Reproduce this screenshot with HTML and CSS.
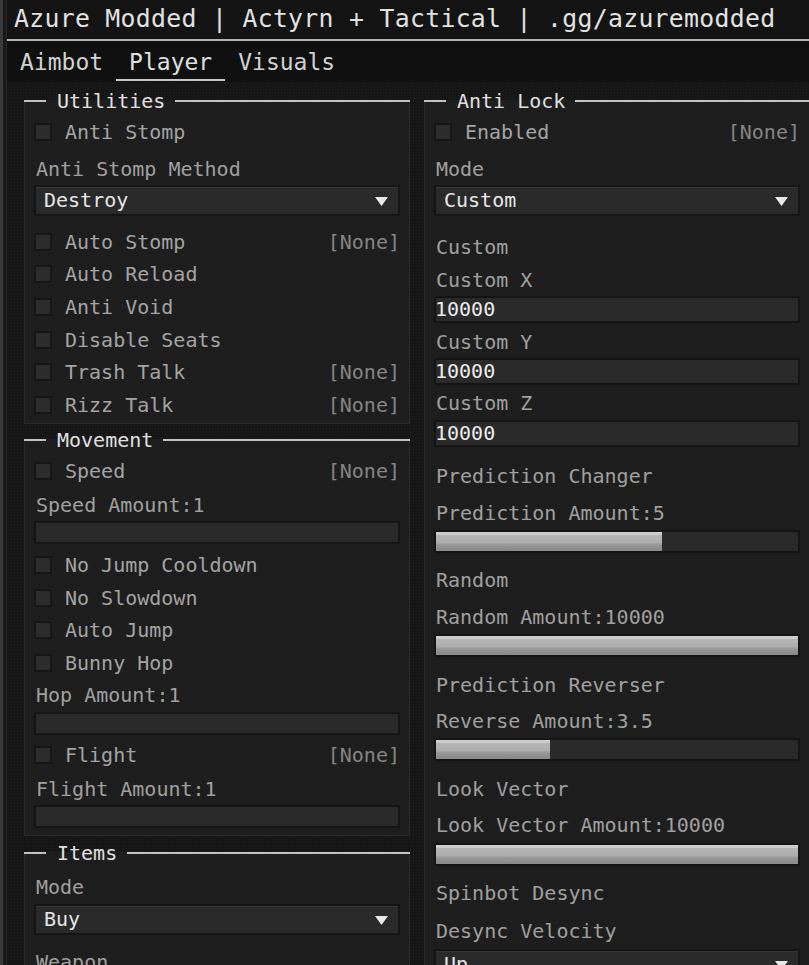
FILE: index.html
```html
<!DOCTYPE html>
<html>
<head>
<meta charset="utf-8">
<title>Azure Modded</title>
<link rel="stylesheet" href="styles.css">
</head>
<body>
<div class="window">
  <header class="titlebar">Azure Modded | Actyrn + Tactical | .gg/azuremodded</header>
  <nav class="tabs">
    <span class="tab">Aimbot</span>
    <span class="tab active">Player</span>
    <span class="tab">Visuals</span>
  </nav>
  <main class="content">
    <div class="col">
      <section class="panel pb2">
        <div class="sec-head"><span>Utilities</span></div>
        <div class="check"><i class="box"></i><span class="name">Anti Stomp</span></div>
        <div class="lbl mt8">Anti Stomp Method</div>
        <div class="combo mt4"><span>Destroy</span><svg class="arrow" width="13" height="9" viewBox="0 0 13 9"><polygon points="0,0 13,0 6.5,9"/></svg></div>
        <div class="checks mt10">
          <div class="check"><i class="box"></i><span class="name">Auto Stomp</span><span class="key">[None]</span></div>
          <div class="check"><i class="box"></i><span class="name">Auto Reload</span></div>
          <div class="check"><i class="box"></i><span class="name">Anti Void</span></div>
          <div class="check"><i class="box"></i><span class="name">Disable Seats</span></div>
          <div class="check"><i class="box"></i><span class="name">Trash Talk</span><span class="key">[None]</span></div>
          <div class="check"><i class="box"></i><span class="name">Rizz Talk</span><span class="key">[None]</span></div>
        </div>
      </section>
      <section class="panel pb7">
        <div class="sec-head"><span>Movement</span></div>
        <div class="check"><i class="box"></i><span class="name">Speed</span><span class="key">[None]</span></div>
        <div class="lbl mt5">Speed Amount:1</div>
        <div class="slider mt4"><div class="fill" style="width:0%"></div></div>
        <div class="checks mt5">
          <div class="check"><i class="box"></i><span class="name">No Jump Cooldown</span></div>
          <div class="check"><i class="box"></i><span class="name">No Slowdown</span></div>
          <div class="check"><i class="box"></i><span class="name">Auto Jump</span></div>
          <div class="check"><i class="box"></i><span class="name">Bunny Hop</span></div>
        </div>
        <div class="lbl mt4">Hop Amount:1</div>
        <div class="slider mt5"><div class="fill" style="width:0%"></div></div>
        <div class="check mt4"><i class="box"></i><span class="name">Flight</span><span class="key">[None]</span></div>
        <div class="lbl mt5">Flight Amount:1</div>
        <div class="slider mt4"><div class="fill" style="width:0%"></div></div>
      </section>
      <section class="panel items">
        <div class="sec-head"><span>Items</span></div>
        <div class="lbl mt21">Mode</div>
        <div class="combo mt5"><span>Buy</span><svg class="arrow" width="13" height="9" viewBox="0 0 13 9"><polygon points="0,0 13,0 6.5,9"/></svg></div>
        <div class="lbl mt15">Weapon</div>
      </section>
    </div>
    <div class="col">
      <section class="panel">
        <div class="sec-head"><span>Anti Lock</span></div>
        <div class="check"><i class="box"></i><span class="name">Enabled</span><span class="key">[None]</span></div>
        <div class="lbl mt8">Mode</div>
        <div class="combo mt4"><span>Custom</span><svg class="arrow" width="13" height="9" viewBox="0 0 13 9"><polygon points="0,0 13,0 6.5,9"/></svg></div>
        <div class="lbl mt19">Custom</div>
        <div class="lbl mt9">Custom X</div>
        <div class="input mt4">10000</div>
        <div class="lbl mt7">Custom Y</div>
        <div class="input mt4">10000</div>
        <div class="lbl mt6">Custom Z</div>
        <div class="input mt5">10000</div>
        <div class="lbl mt17">Prediction Changer</div>
        <div class="lbl mt13">Prediction Amount:5</div>
        <div class="slider mt5"><div class="fill" style="width:62.4%"></div></div>
        <div class="lbl mt15">Random</div>
        <div class="lbl mt13">Random Amount:10000</div>
        <div class="slider mt5"><div class="fill" style="width:100%"></div></div>
        <div class="lbl mt16">Prediction Reverser</div>
        <div class="lbl mt12">Reverse Amount:3.5</div>
        <div class="slider mt5"><div class="fill" style="width:31.5%"></div></div>
        <div class="lbl mt16">Look Vector</div>
        <div class="lbl mt12">Look Vector Amount:10000</div>
        <div class="slider mt6"><div class="fill" style="width:100%"></div></div>
        <div class="lbl mt15">Spinbot Desync</div>
        <div class="lbl mt14">Desync Velocity</div>
        <div class="combo mt6"><span>Up</span><svg class="arrow" width="13" height="9" viewBox="0 0 13 9"><polygon points="0,0 13,0 6.5,9"/></svg></div>
      </section>
    </div>
  </main>
</div>
</body>
</html>
```
FILE: styles.css
```css
html, body {
  margin: 0;
  height: 100%;
  overflow: hidden;
}
body {
  background: linear-gradient(to right, #3a3a3a 0, #3a3a3a 3px, #191919 3px, #191919 6px, #262626 6px, #262626 7px) no-repeat;
  background-color: #191919;
  font-family: "DejaVu Sans Mono", "Liberation Mono", monospace;
  color: #a2a2a2;
}
.window {
  margin-left: 7px;
  width: 803px;
  height: 965px;
  background: #161616;
  overflow: hidden;
}
.titlebar {
  height: 37px;
  line-height: 37px;
  padding: 0 0 2px 7px;
  border-bottom: 2px solid #b4b4b4;
  background: #141414;
  color: #e2e2e2;
  font-size: 24.8px;
  letter-spacing: 0.3px;
  white-space: nowrap;
}
.tabs {
  display: flex;
  height: 41px;
  background: #101010;
}
.tab {
  padding: 5px 13px 0;
  line-height: 33px;
  height: 33px;
  border-bottom: 2px solid transparent;
  font-size: 23px;
  color: #d2d2d2;
}
.tab.active {
  border-bottom-color: #c8c8c8;
  color: #e0e0e0;
}
.content {
  display: grid;
  grid-template-columns: 386px 386px;
  column-gap: 14px;
  align-items: start;
  padding: 18px 0 0 17px;
  background-color: #161616;
  background-image: radial-gradient(rgba(255,255,255,0.035) 0.6px, transparent 0.8px);
  background-size: 3px 3px;
  height: 900px;
}
.col {
  display: flex;
  flex-direction: column;
}
.panel {
  background: #1e1e1e;
  border: 1px solid #2a2a2a;
  border-top: none;
  padding: 0 9px 0 9px;
  font-size: 20px;
}
.panel + .panel { margin-top: 15px; }
.panel.pb2 { padding-bottom: 2px; }
.panel.pb7 { padding-bottom: 7px; }
.panel.items { margin-top: 16px; }

.sec-head {
  display: flex;
  align-items: center;
  height: 2px;
  margin: 0 -10px 14px;
}
.sec-head::before,
.sec-head::after {
  content: "";
  height: 2px;
  background: #c2c2c2;
}
.sec-head::before { width: 22px; }
.sec-head::after { flex: 1; }
.sec-head span {
  padding: 0 10px 0 11px;
  line-height: 24px;
  color: #e0e0e0;
  white-space: nowrap;
}

.check {
  display: flex;
  align-items: center;
  height: 32.6px;
}
.box {
  width: 14px;
  height: 14px;
  border: 2px solid #161616;
  background: #2c2c2c;
  margin-right: 13px;
  flex: none;
}
.name {
  flex: 1;
  color: #a4a4a4;
  white-space: nowrap;
}
.key {
  color: #858585;
}
.lbl {
  line-height: 24px;
  height: 24px;
  padding-left: 2px;
  color: #a0a0a0;
  white-space: nowrap;
}
.combo {
  box-sizing: border-box;
  height: 31px;
  border: 2px solid #151515;
  background: #2a2a2a;
  box-shadow: inset 0 1px 0 #363636;
  display: flex;
  align-items: center;
  justify-content: space-between;
  padding: 0 10px 0 8px;
  color: #e6e6e6;
}
.arrow {
  fill: #e8e8e8;
  margin-top: 3px;
}
.input {
  box-sizing: border-box;
  height: 27px;
  line-height: 23px;
  border: 2px solid #151515;
  background: #2a2a2a;
  color: #ececec;
  text-indent: -1px;
}
.slider {
  box-sizing: border-box;
  height: 23px;
  border: 2px solid #151515;
  background: #2a2a2a;
}
.fill {
  height: 100%;
  background: linear-gradient(to bottom, #d0d0d0 0, #c8c8c8 18%, #b6b6b6 18%, #adadad 55%, #969696 68%, #888888 100%);
}

.mt4 { margin-top: 4px; }
.mt5 { margin-top: 5px; }
.mt6 { margin-top: 6px; }
.mt7 { margin-top: 7px; }
.mt8 { margin-top: 8px; }
.mt9 { margin-top: 9px; }
.mt10 { margin-top: 10px; }
.mt12 { margin-top: 12px; }
.mt13 { margin-top: 13px; }
.mt14 { margin-top: 14px; }
.mt15 { margin-top: 15px; }
.mt16 { margin-top: 16px; }
.mt17 { margin-top: 17px; }
.mt19 { margin-top: 19px; }
.mt21 { margin-top: 21px; }
```
